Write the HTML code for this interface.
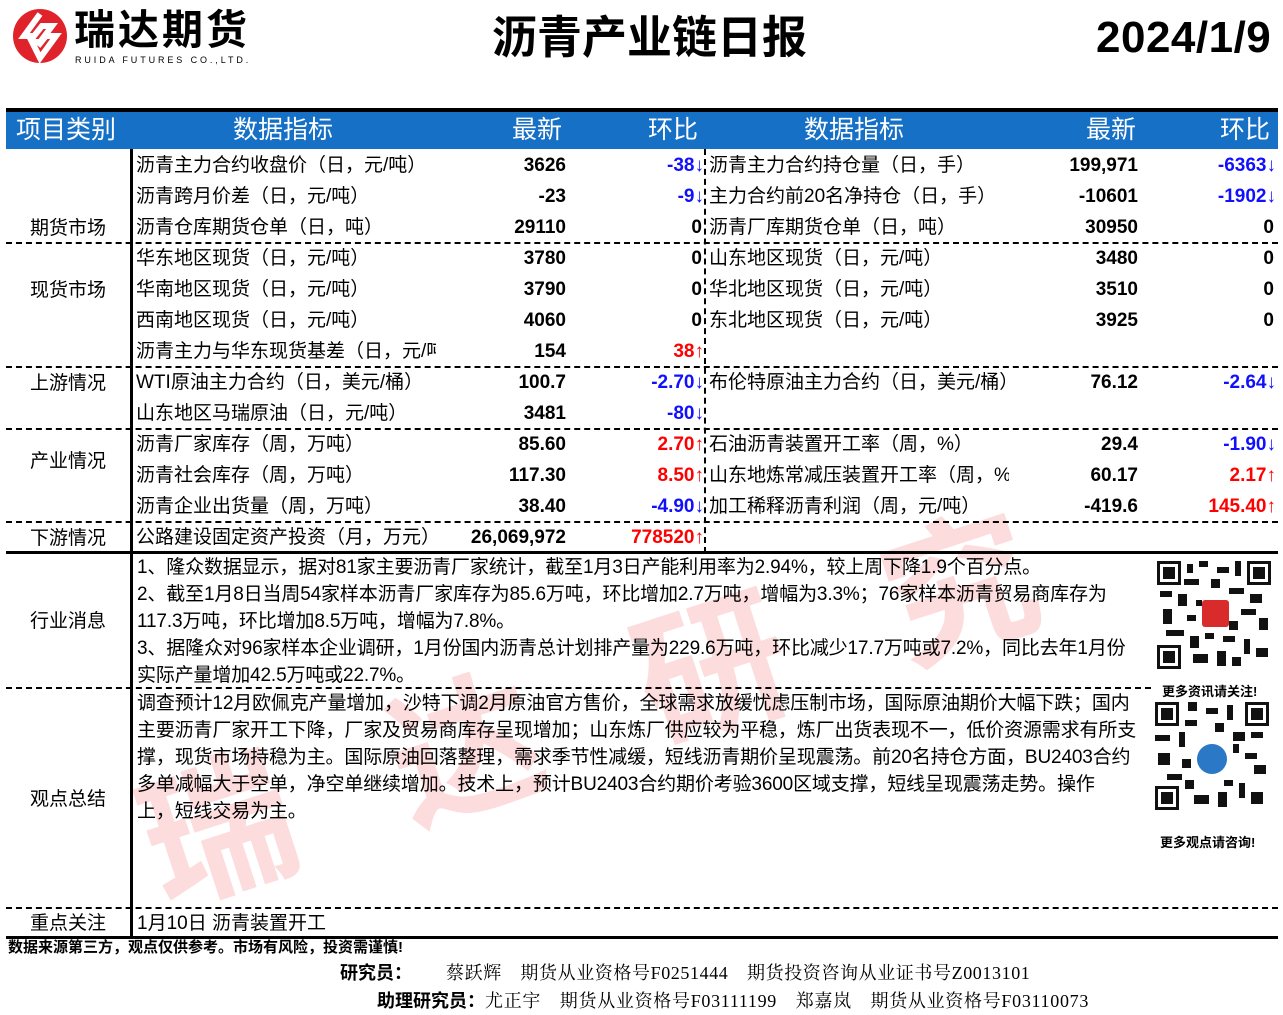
<!DOCTYPE html><html><head><meta charset="utf-8"><style>
*{margin:0;padding:0;box-sizing:border-box}
body{width:1283px;height:1015px;background:#fff;position:relative;overflow:hidden;font-family:"Liberation Sans","Noto Sans CJK SC",sans-serif;color:#000}
.a{position:absolute;white-space:nowrap}
.t{font-size:19px;line-height:31px;height:31px}
.r{text-align:right;font-weight:bold}
.c{text-align:center;width:124px;left:6px;font-size:19px}
.b{color:#1010ff}.rd{color:#ff0000}
.dh{position:absolute;height:0;border-top:2px dashed #000}
.p{font-size:19px;line-height:27px;left:137px;white-space:nowrap;letter-spacing:-0.15px}
</style></head><body>
<!-- watermark -->
<div class="a" style="left:110px;top:740px;font-size:150px;color:rgba(240,80,80,0.2);font-weight:bold;transform:rotate(-18deg);transform-origin:left top;letter-spacing:110px">瑞达研究</div>
<!-- logo -->
<svg class="a" style="left:12px;top:6px" width="56" height="60" viewBox="0 0 56 60"><circle cx="28" cy="30" r="27" fill="#e0232b"/><path d="M28 8 L12 30 L22 30 L30 20 L40 20 L28 36 L20 36 L28 52 L44 30 L34 30 L26 40" fill="none" stroke="#fff" stroke-width="6" stroke-linejoin="miter"/></svg>
<div class="a" style="left:74px;top:6px;font-size:41px;font-weight:bold;letter-spacing:3px;line-height:48px">瑞达期货</div>
<div class="a" style="left:75px;top:55px;font-size:9px;letter-spacing:2.9px">RUIDA FUTURES CO.,LTD.</div>
<div class="a" style="left:492px;top:10px;font-size:45px;font-weight:bold;line-height:56px">沥青产业链日报</div>
<div class="a" style="left:1096px;top:12px;font-size:44px;font-weight:bold;line-height:52px;letter-spacing:0.5px">2024/1/9</div>
<!-- header -->
<div class="a" style="left:6px;top:108px;width:1272px;height:4px;background:#000"></div>
<div class="a" style="left:6px;top:112px;width:1272px;height:37px;background:#1570c6;color:#fff;font-size:25px;line-height:37px">
<span class="a" style="left:10px">项目类别</span><span class="a" style="left:227px">数据指标</span><span class="a" style="left:506px">最新</span><span class="a" style="left:642px">环比</span><span class="a" style="left:798px">数据指标</span><span class="a" style="left:1080px">最新</span><span class="a" style="left:1214px">环比</span></div>
<!-- vertical lines -->
<div class="a" style="left:130px;top:149px;width:3px;height:788px;background:#000"></div>
<div class="a" style="left:704px;top:149px;height:404px;border-left:2px dashed #000"></div>
<!-- horizontal lines -->
<div class="dh" style="left:6px;width:1272px;top:242px"></div>
<div class="dh" style="left:6px;width:1272px;top:366px"></div>
<div class="dh" style="left:6px;width:1272px;top:428px"></div>
<div class="dh" style="left:6px;width:1272px;top:521px"></div>
<div class="a" style="left:6px;top:551px;width:1272px;height:3px;background:#000"></div>
<div class="dh" style="left:6px;width:1145px;top:687px"></div>
<div class="dh" style="left:6px;width:1272px;top:907px"></div>
<div class="a" style="left:6px;top:936px;width:1272px;height:3px;background:#000"></div>
<!-- categories -->
<div class="a c" style="top:213px;line-height:31px">期货市场</div>
<div class="a c" style="top:275px;line-height:31px">现货市场</div>
<div class="a c" style="top:368px;line-height:31px">上游情况</div>
<div class="a c" style="top:446px;line-height:31px">产业情况</div>
<div class="a c" style="top:523px;line-height:31px">下游情况</div>
<div class="a c" style="top:606px;line-height:31px">行业消息</div>
<div class="a c" style="top:784px;line-height:31px">观点总结</div>
<div class="a c" style="top:908px;line-height:31px">重点关注</div>
<!-- rows left -->
<div class="a t" style="left:136px;top:150px">沥青主力合约收盘价（日，元/吨）</div><div class="a t r" style="left:440px;width:126px;top:150px">3626</div><div class="a t r b" style="left:580px;width:124px;top:150px">-38↓</div>
<div class="a t" style="left:136px;top:181px">沥青跨月价差（日，元/吨）</div><div class="a t r" style="left:440px;width:126px;top:181px">-23</div><div class="a t r b" style="left:580px;width:124px;top:181px">-9↓</div>
<div class="a t" style="left:136px;top:212px">沥青仓库期货仓单（日，吨）</div><div class="a t r" style="left:440px;width:126px;top:212px">29110</div><div class="a t r" style="left:580px;width:122px;top:212px">0</div>
<div class="a t" style="left:136px;top:243px">华东地区现货（日，元/吨）</div><div class="a t r" style="left:440px;width:126px;top:243px">3780</div><div class="a t r" style="left:580px;width:122px;top:243px">0</div>
<div class="a t" style="left:136px;top:274px">华南地区现货（日，元/吨）</div><div class="a t r" style="left:440px;width:126px;top:274px">3790</div><div class="a t r" style="left:580px;width:122px;top:274px">0</div>
<div class="a t" style="left:136px;top:305px">西南地区现货（日，元/吨）</div><div class="a t r" style="left:440px;width:126px;top:305px">4060</div><div class="a t r" style="left:580px;width:122px;top:305px">0</div>
<div class="a t" style="left:136px;top:336px;width:300px;overflow:hidden">沥青主力与华东现货基差（日，元/吨）</div><div class="a t r" style="left:440px;width:126px;top:336px">154</div><div class="a t r rd" style="left:580px;width:124px;top:336px">38↑</div>
<div class="a t" style="left:136px;top:367px">WTI原油主力合约（日，美元/桶）</div><div class="a t r" style="left:440px;width:126px;top:367px">100.7</div><div class="a t r b" style="left:580px;width:124px;top:367px">-2.70↓</div>
<div class="a t" style="left:136px;top:398px">山东地区马瑞原油（日，元/吨）</div><div class="a t r" style="left:440px;width:126px;top:398px">3481</div><div class="a t r b" style="left:580px;width:124px;top:398px">-80↓</div>
<div class="a t" style="left:136px;top:429px">沥青厂家库存（周，万吨）</div><div class="a t r" style="left:440px;width:126px;top:429px">85.60</div><div class="a t r rd" style="left:580px;width:124px;top:429px">2.70↑</div>
<div class="a t" style="left:136px;top:460px">沥青社会库存（周，万吨）</div><div class="a t r" style="left:440px;width:126px;top:460px">117.30</div><div class="a t r rd" style="left:580px;width:124px;top:460px">8.50↑</div>
<div class="a t" style="left:136px;top:491px">沥青企业出货量（周，万吨）</div><div class="a t r" style="left:440px;width:126px;top:491px">38.40</div><div class="a t r b" style="left:580px;width:124px;top:491px">-4.90↓</div>
<div class="a t" style="left:136px;top:522px">公路建设固定资产投资（月，万元）</div><div class="a t r" style="left:440px;width:126px;top:522px">26,069,972</div><div class="a t r rd" style="left:580px;width:124px;top:522px">778520↑</div>
<!-- rows right -->
<div class="a t" style="left:709px;top:150px">沥青主力合约持仓量（日，手）</div><div class="a t r" style="left:1000px;width:138px;top:150px">199,971</div><div class="a t r b" style="left:1140px;width:136px;top:150px">-6363↓</div>
<div class="a t" style="left:709px;top:181px">主力合约前20名净持仓（日，手）</div><div class="a t r" style="left:1000px;width:138px;top:181px">-10601</div><div class="a t r b" style="left:1140px;width:136px;top:181px">-1902↓</div>
<div class="a t" style="left:709px;top:212px">沥青厂库期货仓单（日，吨）</div><div class="a t r" style="left:1000px;width:138px;top:212px">30950</div><div class="a t r" style="left:1140px;width:134px;top:212px">0</div>
<div class="a t" style="left:709px;top:243px">山东地区现货（日，元/吨）</div><div class="a t r" style="left:1000px;width:138px;top:243px">3480</div><div class="a t r" style="left:1140px;width:134px;top:243px">0</div>
<div class="a t" style="left:709px;top:274px">华北地区现货（日，元/吨）</div><div class="a t r" style="left:1000px;width:138px;top:274px">3510</div><div class="a t r" style="left:1140px;width:134px;top:274px">0</div>
<div class="a t" style="left:709px;top:305px">东北地区现货（日，元/吨）</div><div class="a t r" style="left:1000px;width:138px;top:305px">3925</div><div class="a t r" style="left:1140px;width:134px;top:305px">0</div>
<div class="a t" style="left:709px;top:367px">布伦特原油主力合约（日，美元/桶）</div><div class="a t r" style="left:1000px;width:138px;top:367px">76.12</div><div class="a t r b" style="left:1140px;width:136px;top:367px">-2.64↓</div>
<div class="a t" style="left:709px;top:429px">石油沥青装置开工率（周，%）</div><div class="a t r" style="left:1000px;width:138px;top:429px">29.4</div><div class="a t r b" style="left:1140px;width:136px;top:429px">-1.90↓</div>
<div class="a t" style="left:709px;top:460px;width:300px;overflow:hidden">山东地炼常减压装置开工率（周，%）</div><div class="a t r" style="left:1000px;width:138px;top:460px">60.17</div><div class="a t r rd" style="left:1140px;width:136px;top:460px">2.17↑</div>
<div class="a t" style="left:709px;top:491px">加工稀释沥青利润（周，元/吨）</div><div class="a t r" style="left:1000px;width:138px;top:491px">-419.6</div><div class="a t r rd" style="left:1140px;width:136px;top:491px">145.40↑</div>
<!-- paragraphs -->
<div class="a p" style="top:554px">1、隆众数据显示，据对81家主要沥青厂家统计，截至1月3日产能利用率为2.94%，较上周下降1.9个百分点。<br>2、截至1月8日当周54家样本沥青厂家库存为85.6万吨，环比增加2.7万吨，增幅为3.3%；76家样本沥青贸易商库存为<br>117.3万吨，环比增加8.5万吨，增幅为7.8%。<br>3、据隆众对96家样本企业调研，1月份国内沥青总计划排产量为229.6万吨，环比减少17.7万吨或7.2%，同比去年1月份<br>实际产量增加42.5万吨或22.7%。</div>
<div class="a p" style="top:690px">调查预计12月欧佩克产量增加，沙特下调2月原油官方售价，全球需求放缓忧虑压制市场，国际原油期价大幅下跌；国内<br>主要沥青厂家开工下降，厂家及贸易商库存呈现增加；山东炼厂供应较为平稳，炼厂出货表现不一，低价资源需求有所支<br>撑，现货市场持稳为主。国际原油回落整理，需求季节性减缓，短线沥青期价呈现震荡。前20名持仓方面，BU2403合约<br>多单减幅大于空单，净空单继续增加。技术上，预计BU2403合约期价考验3600区域支撑，短线呈现震荡走势。操作<br>上，短线交易为主。</div>
<div class="a t" style="left:137px;top:908px">1月10日 沥青装置开工</div>
<!-- QR codes -->
<svg class="a" style="left:1157px;top:561px" width="114" height="108" viewBox="0 0 38 36"><rect width="38" height="36" fill="#fff"/><g fill="#111"><rect x="0" y="0" width="8" height="8"/><rect x="30" y="0" width="8" height="8"/><rect x="0" y="28" width="8" height="8"/></g><g fill="#fff"><rect x="1" y="1" width="6" height="6"/><rect x="31" y="1" width="6" height="6"/><rect x="1" y="29" width="6" height="6"/></g><g fill="#111"><rect x="2" y="2" width="4" height="4"/><rect x="32" y="2" width="4" height="4"/><rect x="2" y="30" width="4" height="4"/><rect x="10" y="1" width="2" height="3"/><rect x="14" y="0" width="3" height="2"/><rect x="20" y="2" width="4" height="2"/><rect x="26" y="0" width="2" height="5"/><rect x="9" y="6" width="5" height="2"/><rect x="18" y="6" width="3" height="3"/><rect x="1" y="10" width="4" height="2"/><rect x="7" y="11" width="3" height="4"/><rect x="24" y="9" width="5" height="2"/><rect x="31" y="11" width="4" height="3"/><rect x="2" y="16" width="3" height="5"/><rect x="28" y="16" width="5" height="2"/><rect x="34" y="19" width="3" height="4"/><rect x="3" y="23" width="6" height="2"/><rect x="11" y="25" width="3" height="4"/><rect x="22" y="25" width="4" height="2"/><rect x="29" y="26" width="2" height="5"/><rect x="33" y="29" width="4" height="3"/><rect x="12" y="31" width="5" height="3"/><rect x="20" y="30" width="3" height="5"/><rect x="25" y="32" width="3" height="3"/><rect x="13" y="13" width="2" height="2"/><rect x="10" y="18" width="3" height="2"/><rect x="24" y="20" width="3" height="3"/><rect x="16" y="24" width="3" height="2"/></g><rect x="15" y="13" width="9" height="9" rx="1" fill="#d92b2b"/></svg>
<div class="a" style="left:1162px;top:681px;font-size:13px;font-weight:bold">更多资讯请关注!</div>
<svg class="a" style="left:1155px;top:702px" width="114" height="108" viewBox="0 0 38 36"><rect width="38" height="36" fill="#fff"/><g fill="#111"><rect x="0" y="0" width="8" height="8"/><rect x="30" y="0" width="8" height="8"/><rect x="0" y="28" width="8" height="8"/></g><g fill="#fff"><rect x="1" y="1" width="6" height="6"/><rect x="31" y="1" width="6" height="6"/><rect x="1" y="29" width="6" height="6"/></g><g fill="#111"><rect x="2" y="2" width="4" height="4"/><rect x="32" y="2" width="4" height="4"/><rect x="2" y="30" width="4" height="4"/><rect x="11" y="0" width="3" height="3"/><rect x="17" y="2" width="4" height="2"/><rect x="24" y="1" width="2" height="5"/><rect x="10" y="6" width="4" height="2"/><rect x="20" y="7" width="3" height="3"/><rect x="0" y="11" width="5" height="2"/><rect x="8" y="10" width="2" height="5"/><rect x="26" y="10" width="4" height="3"/><rect x="32" y="10" width="4" height="2"/><rect x="1" y="17" width="4" height="4"/><rect x="30" y="17" width="4" height="2"/><rect x="33" y="21" width="4" height="3"/><rect x="4" y="24" width="5" height="2"/><rect x="10" y="26" width="3" height="3"/><rect x="23" y="26" width="3" height="2"/><rect x="28" y="27" width="2" height="5"/><rect x="32" y="30" width="4" height="4"/><rect x="13" y="31" width="5" height="3"/><rect x="21" y="30" width="3" height="5"/><rect x="9" y="19" width="3" height="3"/><rect x="26" y="14" width="2" height="3"/></g><circle cx="19" cy="19" r="5" fill="#2b78c6"/></svg>
<div class="a" style="left:1160px;top:832px;font-size:13px;font-weight:bold">更多观点请咨询!</div>
<!-- footer -->
<div class="a" style="left:8px;top:938px;font-size:15px;font-weight:bold;line-height:20px">数据来源第三方，观点仅供参考。市场有风险，投资需谨慎!</div>
<div class="a" style="left:340px;top:961px;font-size:18px;line-height:24px"><b>研究员：</b><span style="font-family:'Liberation Serif','Noto Serif CJK SC',serif;margin-left:34px;letter-spacing:0.6px">蔡跃辉　期货从业资格号F0251444　期货投资咨询从业证书号Z0013101</span></div>
<div class="a" style="left:377px;top:989px;font-size:18px;line-height:24px"><b>助理研究员：</b><span style="font-family:'Liberation Serif','Noto Serif CJK SC',serif;letter-spacing:0.7px">尤正宇　期货从业资格号F03111199　郑嘉岚　期货从业资格号F03110073</span></div>
</body></html>
